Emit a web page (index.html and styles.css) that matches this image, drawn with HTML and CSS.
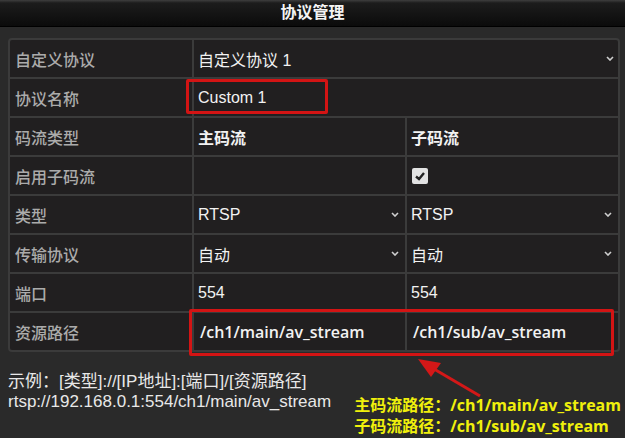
FILE: index.html
```html
<!DOCTYPE html>
<html lang="zh">
<head>
<meta charset="UTF-8">
<title>协议管理</title>
<link rel="stylesheet" href="styles.css">
</head>
<body>

<div class="titlebar">协议管理</div>

<div class="wrap">
  <div class="grid">
    <div class="lbl">自定义协议</div>
    <div class="val span sel">自定义协议 1<svg class="arr" viewBox="0 0 8 5"><polyline points="1,1 4,4 7,1"/></svg></div>

    <div class="lbl">协议名称</div>
    <div class="val span">Custom 1</div>

    <div class="lbl">码流类型</div>
    <div class="val b">主码流</div>
    <div class="val b">子码流</div>

    <div class="lbl">启用子码流</div>
    <div class="val"></div>
    <div class="val"><span class="chk"><svg viewBox="0 0 16 16"><polyline points="4,8.5 7,11 12,5"/></svg></span></div>

    <div class="lbl">类型</div>
    <div class="val sel">RTSP<svg class="arr" viewBox="0 0 8 5"><polyline points="1,1 4,4 7,1"/></svg></div>
    <div class="val sel">RTSP<svg class="arr" viewBox="0 0 8 5"><polyline points="1,1 4,4 7,1"/></svg></div>

    <div class="lbl">传输协议</div>
    <div class="val sel">自动<svg class="arr" viewBox="0 0 8 5"><polyline points="1,1 4,4 7,1"/></svg></div>
    <div class="val sel">自动<svg class="arr" viewBox="0 0 8 5"><polyline points="1,1 4,4 7,1"/></svg></div>

    <div class="lbl">端口</div>
    <div class="val">554</div>
    <div class="val">554</div>

    <div class="lbl">资源路径</div>
    <div class="val path">/ch1/main/av_stream</div>
    <div class="val path">/ch1/sub/av_stream</div>
  </div>

  <!-- 标注 -->
  <div class="mark m-name"></div>
  <div class="mark m-path"></div>
  <svg class="pointer" viewBox="0 0 75 50">
    <line x1="20" y1="14" x2="66" y2="41"/>
    <polygon points="4,4 27,8 17,22"/>
  </svg>
</div>

<div class="foot">
  <div class="example">
    示例：[类型]://[IP地址]:[端口]/[资源路径]<br>
    rtsp://192.168.0.1:554/ch1/main/av_stream
  </div>
  <div class="note">
    主码流路径：/ch1/main/av_stream<br>
    子码流路径：/ch1/sub/av_stream
  </div>
</div>

</body>
</html>
```

FILE: styles.css
```css
*{margin:0;padding:0;box-sizing:border-box}
body{background:#2a2a2a;width:625px;height:438px;overflow:hidden;font-family:"Liberation Sans","Noto Sans CJK SC",sans-serif;color:#eee}

.titlebar{height:27px;line-height:26px;text-align:center;font-size:16px;color:#f4f4f4;font-weight:bold;
  background:linear-gradient(to bottom,#3e3e3e 0,#1c1c1c 3px,#0b0b0b 100%);border-bottom:1px solid #000}

.wrap{position:relative;margin:11px 5px 0 8px}
.grid{display:grid;grid-template-columns:182px 211px 211px;grid-auto-rows:37px;gap:2px;
  background:#3b3b3b;border:2px solid #3b3b3b;border-radius:4px;overflow:hidden}
.grid > div{background:#211f20;display:flex;align-items:center;font-size:16px}
.lbl{padding-left:5px;color:#ababab;font-weight:500}
.val{padding:0 6px 0 4px;color:#f2f2f2}
.grid > div:nth-child(3n+1) + .val + .val{padding-left:6px;padding-right:4px}
.span{grid-column:span 2;padding-right:4px}
.sel{justify-content:space-between}
.arr{width:8px;height:5px;fill:none;stroke:#cfcfcf;stroke-width:1.6}
.b{font-weight:bold;font-family:"Noto Sans CJK SC",sans-serif;font-size:15px}
.path{font-family:"Open Sans","Noto Sans CJK SC",sans-serif;font-weight:600;font-size:16px;padding-left:6px}

.chk{width:16px;height:16px;border-radius:2px;background:#e2e2e2;display:flex;margin-left:1px}
.chk svg{width:16px;height:16px;fill:none;stroke:#222;stroke-width:2.4}

/* 标注 */
.mark{position:absolute;border:3px solid #d31414;border-radius:2px}
.m-name{left:178px;top:41px;width:142px;height:35px}
.m-path{left:181px;top:271px;width:425px;height:47px}
.pointer{position:absolute;left:406px;top:317px;width:75px;height:50px}
.pointer line{stroke:#d31818;stroke-width:3}
.pointer polygon{fill:#d31818}

.foot{display:flex;justify-content:space-between;padding:20px 4px 0 8px}
.example{font-size:17px;line-height:20px;color:#e8e8e8}
.note{margin-top:23px;font-family:"Open Sans","Noto Sans CJK SC",sans-serif;font-weight:bold;font-size:16px;line-height:21px;color:#f0f00c}
```
